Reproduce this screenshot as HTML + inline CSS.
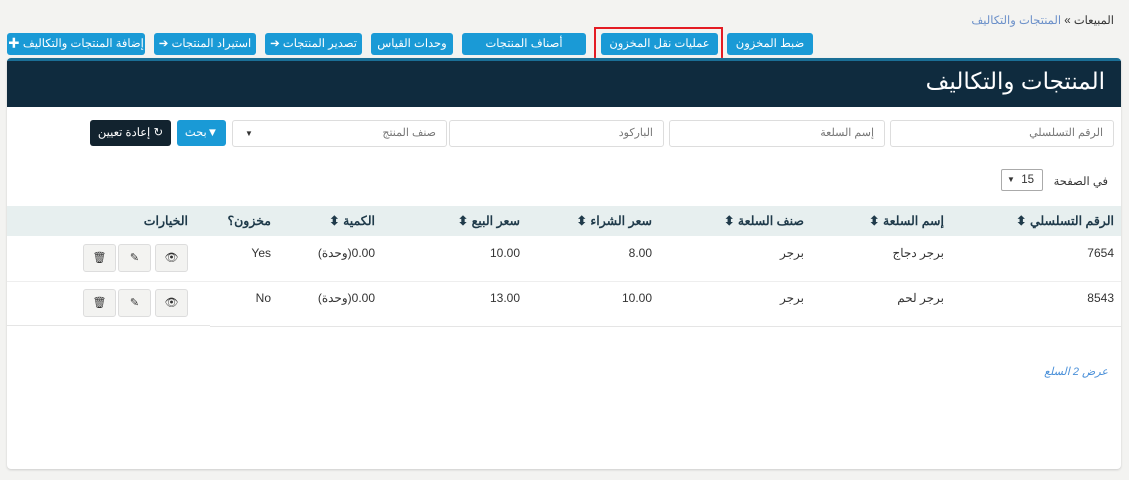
<!DOCTYPE html>
<html><head><meta charset="utf-8"><style>
*{box-sizing:border-box;margin:0;padding:0}
body{width:1129px;height:480px;background:#f3f3f1;font-family:"Liberation Sans","Noto Sans CJK SC",sans-serif;font-size:12px;color:#333;position:relative;overflow:hidden;direction:rtl}
.a{position:absolute}
.btn{position:absolute;top:33px;height:22px;background:#1a9ad6;color:#fff;border-radius:3px;font-size:11.5px;line-height:22px;text-align:center;white-space:nowrap}
.inp{position:absolute;top:120px;height:27px;border:1px solid #ddd;border-radius:3px;background:#fff;color:#777;font-size:11px;line-height:25px;text-align:right;padding-right:10px}
.th{font-weight:bold;color:#1f3a4a;font-size:12.5px;top:213px;white-space:nowrap}
.ab{position:absolute;top:244px;width:33px;height:28px;border:1px solid #ddd;border-radius:3px;background:#f3f3f1;font-size:11px;text-align:center;line-height:26px;direction:ltr}
.q{direction:ltr;display:flex;white-space:nowrap}
.q span{unicode-bidi:isolate}
</style></head><body>
<div class="a" style="right:15px;top:13px;font-size:11.5px"><span style="color:#333">المبيعات</span> » <span style="color:#6a8fc9">المنتجات والتكاليف</span></div>

<div class="btn" style="left:7px;width:138px">إضافة المنتجات والتكاليف ✚</div>
<div class="btn" style="left:154px;width:102px">استيراد المنتجات ➔</div>
<div class="btn" style="left:265px;width:97px">تصدير المنتجات ➔</div>
<div class="btn" style="left:371px;width:82px">وحدات القياس</div>
<div class="btn" style="left:462px;width:124px">أصناف المنتجات</div>
<div class="a" style="left:594px;top:27px;width:129px;height:34px;border:2px solid #e41b23"></div>
<div class="btn" style="left:601px;width:117px">عمليات نقل المخزون</div>
<div class="btn" style="left:727px;width:86px">ضبط المخزون</div>

<div class="a" style="left:7px;top:58px;width:1114px;height:411px;background:#fff;border-radius:4px;box-shadow:0 1px 2px #ccc;overflow:hidden">
 <div class="a" style="left:0;top:0;width:100%;height:4px;background:#1a6f96"></div>
 <div class="a" style="left:0;top:3px;width:100%;height:46px;background:#0f2b3e"></div>
 <div class="a" style="right:16px;top:10px;color:#fff;font-size:23px">المنتجات والتكاليف</div>
</div>

<div class="a" style="left:90px;top:120px;width:81px;height:26px;background:#12232f;color:#fff;border-radius:3px;font-size:11.5px;text-align:center;line-height:26px">↻ إعادة تعيين</div>
<div class="a" style="left:177px;top:120px;width:49px;height:26px;background:#1a9ad6;color:#fff;border-radius:3px;font-size:11.5px;text-align:center;line-height:26px">▼بحث</div>
<div class="inp" style="left:232px;width:215px">صنف المنتج<span style="position:absolute;left:12px;font-size:8px;color:#333">▼</span></div>
<div class="inp" style="left:449px;width:215px">الباركود</div>
<div class="inp" style="left:669px;width:216px">إسم السلعة</div>
<div class="inp" style="left:890px;width:224px">الرقم التسلسلي</div>

<div class="a" style="left:1001px;top:169px;width:42px;height:22px;border:1px solid #aaa;border-radius:2px;background:#fff;font-size:11.5px;line-height:20px;text-align:right;padding-right:8px">15<span style="position:absolute;left:5px;font-size:8px">▼</span></div>
<div class="a" style="right:21px;top:174px;font-size:11.5px;color:#333">في الصفحة</div>

<div class="a" style="left:7px;top:206px;width:1114px;height:30px;background:#e7efef"></div>
<div class="a" style="left:7px;top:281px;width:1114px;height:1px;background:#eee"></div>
<div class="a" style="left:210px;top:326px;width:911px;height:1px;background:#e5e5e5"></div>
<div class="a" style="left:7px;top:325px;width:203px;height:1px;background:#e5e5e5"></div>

<div class="a th" style="right:15px">الرقم التسلسلي ⬍</div>
<div class="a th" style="right:185px">إسم السلعة ⬍</div>
<div class="a th" style="right:325px">صنف السلعة ⬍</div>
<div class="a th" style="right:477px">سعر الشراء ⬍</div>
<div class="a th" style="right:609px">سعر البيع ⬍</div>
<div class="a th" style="right:754px">الكمية ⬍</div>
<div class="a th" style="right:858px">مخزون؟</div>
<div class="a th" style="right:941px">الخيارات</div>

<div class="a" style="right:15px;top:246px">7654</div>
<div class="a" style="right:185px;top:246px">برجر دجاج</div>
<div class="a" style="right:325px;top:246px">برجر</div>
<div class="a" style="right:477px;top:246px">8.00</div>
<div class="a" style="right:609px;top:246px">10.00</div>
<div class="a q" style="right:754px;top:246px"><span>(وحدة)</span><span>0.00</span></div>
<div class="a" style="right:858px;top:246px">Yes</div>

<div class="a" style="right:15px;top:291px">8543</div>
<div class="a" style="right:185px;top:291px">برجر لحم</div>
<div class="a" style="right:325px;top:291px">برجر</div>
<div class="a" style="right:477px;top:291px">10.00</div>
<div class="a" style="right:609px;top:291px">13.00</div>
<div class="a q" style="right:754px;top:291px"><span>(وحدة)</span><span>0.00</span></div>
<div class="a" style="right:858px;top:291px">No</div>

<div class="ab" style="left:155px">👁</div><div class="ab" style="left:118px">✎</div><div class="ab" style="left:83px">🗑</div>
<div class="ab" style="left:155px;top:289px">👁</div><div class="ab" style="left:118px;top:289px">✎</div><div class="ab" style="left:83px;top:289px">🗑</div>

<div class="a" style="right:21px;top:365px;color:#4a90d9;font-style:italic;font-size:11px">عرض 2 السلع</div>
</body></html>
